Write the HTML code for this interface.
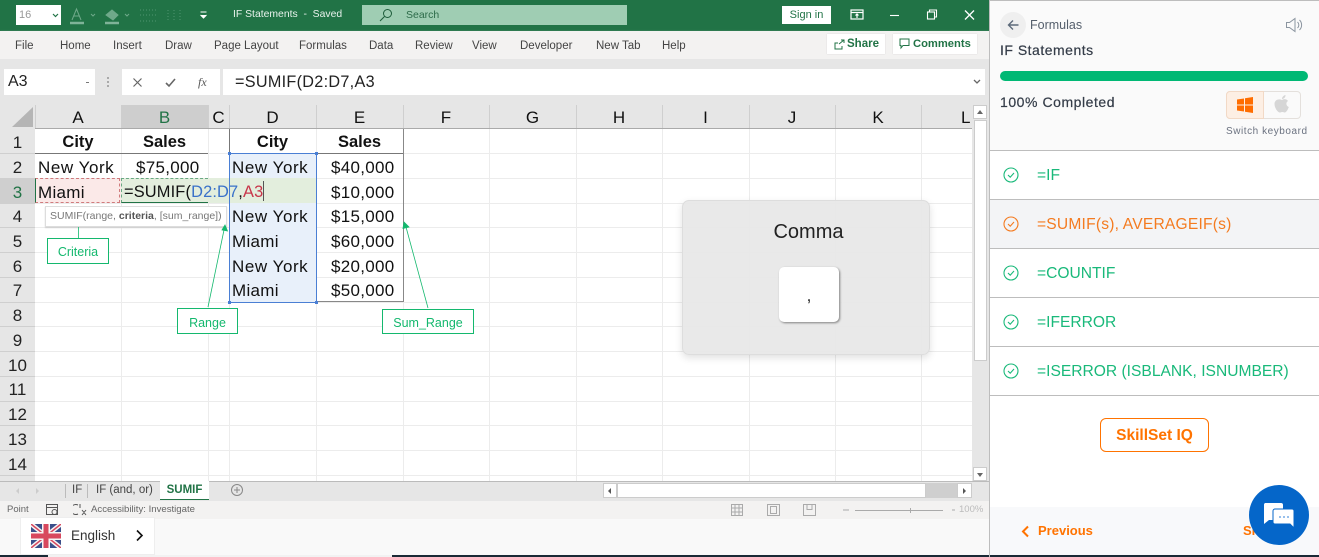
<!DOCTYPE html>
<html><head><meta charset="utf-8"><style>
html,body{margin:0;padding:0}
body{width:1319px;height:557px;overflow:hidden;position:relative;background:#fff;font-family:"Liberation Sans",sans-serif}
.a{position:absolute;white-space:nowrap}
.r{font-size:11.5px;color:#444;top:39px;line-height:14px}
.h{font-size:17px;color:#111;top:108px;line-height:20px;text-align:center}
.n{font-size:17px;color:#222;left:0;width:35px;text-align:center;line-height:25px;margin-top:1px}
.c{font-size:17px;color:#111;line-height:25px;margin-top:1px;letter-spacing:.3px}
.ny{font-size:17px;letter-spacing:.55px}
.b{font-weight:bold;font-size:16.5px;letter-spacing:0}
.lb{position:absolute;border:1px solid #14b86e;color:#14b86e;background:#fff;font-size:12.5px;text-align:center;box-sizing:border-box}
.it{position:absolute;left:990px;width:329px;height:49px;border-bottom:1px solid #bdbdbd;box-sizing:border-box}
.it span{position:absolute;left:47px;top:15px;font-size:15.6px;line-height:20px;white-space:nowrap;color:#19b97a}
.it svg{position:absolute;left:13px;top:16px}
</style></head><body>
<!-- title bar -->
<div class="a" style="left:0;top:0;width:989px;height:31px;background:#217346"></div>
<div class="a" style="left:16px;top:5px;width:45px;height:20px;background:#fff;font-size:11px;color:#999;line-height:20px;text-indent:3px">16</div>
<svg class="a" style="left:52px;top:13px" width="7" height="5"><path d="M1 1l2.500 2.500L6 1" fill="none" stroke="#217346" stroke-width="1.200"/></svg>
<svg class="a" style="left:68px;top:6px" width="130" height="20" fill="none" stroke="#6fa98a" stroke-width="1">
<path d="M4 14L8.500 3L13 14M6 10h5"/><path d="M2 17h14" stroke-width="2.500" stroke="#7fb398"/>
<path d="M23 8l2 2 2-2"/>
<path d="M38 9l6-5 6 5-5 5z" fill="#6fa98a"/><path d="M37 17H51" stroke-width="2.500" stroke="#7fb398"/>
<path d="M57 8l2 2 2-2"/>
<path d="M72 4h16M72 9h16M72 15h16M100 4v11M106 4v11M112 4v11" stroke-dasharray="1 2" stroke="#4f9470"/></svg>
<svg class="a" style="left:199px;top:11px" width="10" height="9" fill="none" stroke="#fff"><path d="M1.500 1h6" /><path d="M1.500 4l3 3 3-3" fill="#fff"/></svg>
<div class="a" style="left:233px;top:8px;font-size:10.400px;color:#e8f2ec;line-height:14px">IF Statements&nbsp; -&nbsp; Saved</div>
<div class="a" style="left:362px;top:5px;width:265px;height:20px;background:#9fcdb3"></div>
<svg class="a" style="left:379px;top:8px" width="14" height="14" fill="none" stroke="#1d5c3a"><circle cx="8.500" cy="5.500" r="4"/><path d="M5.500 8.500L1 13"/></svg>
<div class="a" style="left:406px;top:8px;font-size:10.500px;color:#2c6b49;line-height:14px">Search</div>
<div class="a" style="left:782px;top:6px;width:49px;height:18px;background:#fff;color:#217346;font-size:11px;text-align:center;line-height:19px">Sign in</div>
<svg class="a" style="left:850px;top:9px" width="14" height="12" fill="none" stroke="#fff" stroke-width="1.200"><rect x="1" y="1" width="12" height="9"/><path d="M1 3.500h12"/><path d="M7 9V5M5.500 6.500L7 5l1.500 1.500"/></svg>
<svg class="a" style="left:888px;top:9px" width="100" height="12" fill="none" stroke="#fff" stroke-width="1.100"><path d="M2 6.500h9"/><rect x="39.500" y="3" width="7" height="7"/><path d="M41.500 3V1h7v7h-2"/><path d="M77 1.500l9 9M86 1.500l-9 9" stroke-width="1.300"/></svg>
<!-- ribbon -->
<div class="a" style="left:0;top:31px;width:989px;height:28px;background:#f3f2f1;box-shadow:0 1px 2px #ccc"></div>
<div class="a r" style="left:15px">File</div><div class="a r" style="left:60px">Home</div><div class="a r" style="left:113px">Insert</div><div class="a r" style="left:165px">Draw</div><div class="a r" style="left:214px">Page Layout</div><div class="a r" style="left:299px">Formulas</div><div class="a r" style="left:369px">Data</div><div class="a r" style="left:415px">Review</div><div class="a r" style="left:472px">View</div><div class="a r" style="left:520px">Developer</div><div class="a r" style="left:596px">New Tab</div><div class="a r" style="left:662px">Help</div>
<div class="a" style="left:827px;top:34px;width:58px;height:20px;background:#fff;box-shadow:0 0 1px #ccc;color:#217346;font-size:11.500px;font-weight:bold;line-height:21px;text-indent:20px">Share</div>
<svg class="a" style="left:834px;top:39px" width="12" height="12" fill="none" stroke="#217346"><path d="M7 1h3l0 3M10 1L5 5M8 7v3H1V4h3"/></svg>
<div class="a" style="left:893px;top:34px;width:84px;height:20px;background:#fff;box-shadow:0 0 1px #ccc;color:#217346;font-size:11.200px;font-weight:bold;line-height:21px;text-indent:20px">Comments</div>
<svg class="a" style="left:899px;top:38px" width="12" height="12" fill="none" stroke="#217346"><path d="M1 1h9v6.500H4L2 10V7.500H1z"/></svg>
<!-- formula bar -->
<div class="a" style="left:0;top:59px;width:989px;height:70px;background:#e6e6e6"></div>
<div class="a" style="left:4px;top:69px;width:91px;height:26px;background:#fff;font-size:16px;line-height:26px;text-indent:4px;color:#222">A3</div>
<div class="a" style="left:86px;top:82px;width:3px;height:1px;background:#777"></div>
<div class="a" style="left:107px;top:77px;width:2px;height:10px;border-left:2px dotted #aaa"></div>
<div class="a" style="left:122px;top:69px;width:98px;height:26px;background:#fff"></div>
<svg class="a" style="left:132px;top:76px" width="80" height="14" fill="none" stroke="#666" stroke-width="1.200"><path d="M1.500 2.500l8 8M9.500 2.500l-8 8"/><path d="M34 7l3 3 6-7" stroke-width="1.600"/></svg>
<div class="a" style="left:198px;top:74px;font:italic 12px 'Liberation Serif',serif;color:#555;line-height:16px">fx</div>
<div class="a" style="left:223px;top:69px;width:762px;height:26px;background:#fff;font-size:16.200px;letter-spacing:.3px;line-height:26px;text-indent:12px;color:#222">=SUMIF(D2:D7,A3</div>
<svg class="a" style="left:973px;top:79px" width="8" height="6" fill="none" stroke="#666" stroke-width="1.300"><path d="M1 1l3 3 3-3"/></svg>
<!-- grid -->
<div class="a" style="left:0;top:105px;width:972px;height:24px;background:#e6e6e6"></div>
<div class="a" style="left:0;top:129px;width:35px;height:352px;background:#e6e6e6"></div>
<div class="a" style="left:35px;top:129px;width:937px;height:352px;background:#fff"></div>
<svg class="a" style="left:0;top:105px" width="973" height="376">
<path d="M12 22L33 2V22Z" fill="#b5b5b5"/>
<g stroke="#ececec" fill="none">
<path d="M121.500 24V376M208.500 24V376M229.500 24V376M316.500 24V376M403.500 24V376M489.500 24V376M576.500 24V376M662.500 24V376M749.500 24V376M835.500 24V376M921.500 24V376"/>
<path d="M35 48.500H972M35 73.500H972M35 98.500H972M35 122.500H972M35 147.500H972M35 172.500H972M35 197.500H972M35 221.500H972M35 246.500H972M35 271.500H972M35 296.500H972M35 320.500H972M35 345.500H972M35 370.500H972"/>
</g>
<g stroke="#cfcfcf"><path d="M35.500 0V24M208.500 0V24M229.500 0V24M316.500 0V24M403.500 0V24M489.500 0V24M576.500 0V24M662.500 0V24M749.500 0V24M835.500 0V24M921.500 0V24"/>
<path d="M0 48.500H35M0 73.500H35M0 98.500H35M0 122.500H35M0 147.500H35M0 172.500H35M0 197.500H35M0 221.500H35M0 246.500H35M0 271.500H35M0 296.500H35M0 320.500H35M0 345.500H35M0 370.500H35"/></g>
</svg>
<div class="a" style="left:121px;top:105px;width:87px;height:23px;background:#cecece;border-bottom:1px solid #217346"></div>
<div class="a" style="left:0;top:178px;width:35px;height:25px;background:#cfcfcf"></div>
<div class="a" style="left:35px;top:128px;width:937px;height:1px;background:#aaa"></div>
<div class="a h" style="left:35px;width:86px">A</div><div class="a h" style="left:121px;width:87px;color:#217346">B</div><div class="a h" style="left:208px;width:21px">C</div><div class="a h" style="left:229px;width:87px">D</div><div class="a h" style="left:316px;width:87px">E</div><div class="a h" style="left:403px;width:86px">F</div><div class="a h" style="left:489px;width:87px">G</div><div class="a h" style="left:576px;width:86px">H</div><div class="a h" style="left:662px;width:87px">I</div><div class="a h" style="left:749px;width:86px">J</div><div class="a h" style="left:835px;width:86px">K</div><div class="a h" style="left:961px">L</div>
<div class="a n" style="top:129px">1</div><div class="a n" style="top:154px">2</div><div class="a n" style="top:179px;color:#217346">3</div><div class="a n" style="top:203px">4</div><div class="a n" style="top:228px">5</div><div class="a n" style="top:253px">6</div><div class="a n" style="top:277px">7</div><div class="a n" style="top:302px">8</div><div class="a n" style="top:327px">9</div><div class="a n" style="top:352px">10</div><div class="a n" style="top:376px">11</div><div class="a n" style="top:401px">12</div><div class="a n" style="top:426px">13</div><div class="a n" style="top:451px">14</div>
<!-- fills -->
<div class="a" style="left:230px;top:154px;width:86px;height:148px;background:#e8f0fa"></div>
<div class="a" style="left:35px;top:179px;width:86px;height:24px;background:#fbe9e8"></div>
<div class="a" style="left:121px;top:178px;width:196px;height:25px;background:#e3eedd"></div>
<!-- table borders -->
<div class="a" style="left:35px;top:129px;width:173px;height:24px;border-bottom:1px solid #777"></div>
<div class="a" style="left:229px;top:129px;width:174px;height:24px;border-bottom:1px solid #777"></div>
<div class="a" style="left:229px;top:129px;width:1px;height:25px;background:#777"></div>
<div class="a" style="left:403px;top:129px;width:1px;height:173px;background:#888"></div>
<div class="a" style="left:316px;top:301px;width:88px;height:1px;background:#888"></div>
<div class="a" style="left:229px;top:153px;width:86px;height:148px;border:1px solid #4a7fd4"></div>
<div class="a" style="left:228px;top:152px;width:3px;height:3px;background:#4a7fd4"></div><div class="a" style="left:315px;top:152px;width:3px;height:3px;background:#4a7fd4"></div><div class="a" style="left:228px;top:301px;width:3px;height:3px;background:#4a7fd4"></div><div class="a" style="left:315px;top:301px;width:3px;height:3px;background:#4a7fd4"></div>
<div class="a" style="left:35px;top:178px;width:85px;height:25px;box-sizing:border-box;border:1px dashed #d07a7c;border-left:1px solid #217346"></div>
<div class="a" style="left:121px;top:178px;width:87px;height:25px;box-sizing:border-box;border:1px dashed #6aa883;border-right:0;border-bottom:1px solid #217346"></div>
<!-- cells -->
<div class="a c b" style="left:35px;width:86px;top:129px;text-align:center">City</div><div class="a c b" style="left:121px;width:87px;top:129px;text-align:center">Sales</div>
<div class="a c b" style="left:229px;width:87px;top:129px;text-align:center">City</div><div class="a c b" style="left:316px;width:87px;top:129px;text-align:center">Sales</div>
<div class="a c ny" style="left:38px;top:154px">New York</div><div class="a c" style="left:136px;top:154px">$75,000</div>
<div class="a c" style="left:38px;top:179px">Miami</div>
<div class="a c" style="left:124px;top:179px;font-size:16.400px;letter-spacing:.15px">=SUMIF(<span style="color:#3a72c9">D2:D7</span>,<span style="color:#c8364a">A3</span></div>
<div class="a" style="left:263px;top:181px;width:1px;height:20px;background:#555"></div>
<div class="a c ny" style="left:232px;top:154px">New York</div><div class="a c ny" style="left:232px;top:203px">New York</div><div class="a c" style="left:232px;top:228px">Miami</div><div class="a c ny" style="left:232px;top:253px">New York</div><div class="a c" style="left:232px;top:277px">Miami</div>
<div class="a c" style="left:331px;top:154px">$40,000</div><div class="a c" style="left:331px;top:179px">$10,000</div><div class="a c" style="left:331px;top:203px">$15,000</div><div class="a c" style="left:331px;top:228px">$60,000</div><div class="a c" style="left:331px;top:253px">$20,000</div><div class="a c" style="left:331px;top:277px">$50,000</div>
<!-- tooltip -->
<div class="a" style="left:45px;top:206px;width:180px;height:19px;background:#fff;border:1px solid #ddd;box-shadow:0 1px 1px #ccc;font-size:10.500px;color:#777;line-height:18px;text-indent:4px;box-sizing:content-box">SUMIF(range, <b style="color:#555">criteria</b>, [sum_range])</div>
<!-- callouts -->
<svg class="a" style="left:0;top:200px" width="480" height="130" fill="none" stroke="#14b86e" stroke-width=".8">
<path d="M78.500 27V38"/><path d="M208 107L224 30M428 108L406 27"/>
<path d="M225 25l2.500 6-5.500-1z M404 22l5 5-6 1.500z" fill="#14b86e"/></svg>
<div class="lb" style="left:47px;top:238px;width:62px;height:26px;line-height:27px">Criteria</div>
<div class="lb" style="left:177px;top:308px;width:61px;height:26px;line-height:28px">Range</div>
<div class="lb" style="left:382px;top:309px;width:92px;height:25px;line-height:27px">Sum_Range</div>
<!-- comma card -->
<div class="a" style="left:682px;top:200px;width:248px;height:155px;box-sizing:border-box;background:rgba(232,232,232,.94);border:1.500px solid #ddd;border-radius:7px;box-shadow:0 3px 8px rgba(0,0,0,.12)"></div>
<div class="a" style="left:682px;top:220px;width:253px;text-align:center;font-size:20px;color:#222;line-height:23px;margin-top:.5px">Comma</div>
<div class="a" style="left:779px;top:267px;width:60px;height:55px;background:#fff;border-radius:5px;box-shadow:1px 1px 2px rgba(0,0,0,.45);text-align:center;font-size:17px;line-height:58px;color:#222">,</div>
<!-- scrollbars -->
<div class="a" style="left:972px;top:105px;width:17px;height:376px;background:#e6e6e6"></div>
<div class="a" style="left:973px;top:105px;width:14px;height:14px;background:#fff;border:1px solid #ccc;box-sizing:border-box"></div>
<div class="a" style="left:974px;top:120px;width:13px;height:241px;background:#fff;border:1px solid #ccc;box-sizing:border-box"></div>
<div class="a" style="left:977px;top:110px;border:3px solid transparent;border-top:0;border-bottom:4px solid #666"></div>
<div class="a" style="left:973px;top:467px;width:14px;height:14px;background:#fff;border:1px solid #ccc;box-sizing:border-box"></div>
<div class="a" style="left:977px;top:473px;border:3px solid transparent;border-bottom:0;border-top:4px solid #666"></div>
<!-- tabs -->
<div class="a" style="left:0;top:481px;width:989px;height:20px;background:#e6e6e6;border-top:1px solid #bbb;box-sizing:border-box"></div>
<div class="a" style="left:16px;top:488px;border:3px solid transparent;border-left:0;border-right:3px solid #ccc"></div>
<div class="a" style="left:36px;top:488px;border:3px solid transparent;border-right:0;border-left:3px solid #ccc"></div>
<div class="a" style="left:65px;top:484px;width:1px;height:14px;background:#bbb"></div>
<div class="a" style="left:87px;top:484px;width:1px;height:14px;background:#bbb"></div>
<div class="a" style="left:72px;top:483px;font-size:11.500px;color:#444;line-height:14px">IF</div>
<div class="a" style="left:96px;top:483px;font-size:11.500px;color:#444;line-height:14px">IF (and, or)</div>
<div class="a" style="left:160px;top:481px;width:49px;height:18px;background:#fff;border-bottom:1px solid #217346;color:#217346;font-size:11.500px;font-weight:bold;text-align:center;line-height:18px">SUMIF</div>
<svg class="a" style="left:230px;top:483px" width="14" height="14" fill="none" stroke="#888"><circle cx="7" cy="7" r="5.500"/><path d="M7 4v6M4 7h6"/></svg>
<div class="a" style="left:603px;top:483px;width:354px;height:15px;background:#cfcfcf"></div>
<div class="a" style="left:603px;top:483px;width:14px;height:15px;background:#fff;border:1px solid #ccc;box-sizing:border-box"></div>
<div class="a" style="left:617px;top:483px;width:309px;height:15px;background:#fff;border:1px solid #ccc;box-sizing:border-box"></div>
<div class="a" style="left:957px;top:483px;width:15px;height:15px;background:#fff;border:1px solid #ccc;box-sizing:border-box"></div>
<div class="a" style="left:608px;top:488px;border:3px solid transparent;border-left:0;border-right:3px solid #555"></div>
<div class="a" style="left:963px;top:488px;border:3px solid transparent;border-right:0;border-left:3px solid #555"></div>
<!-- status -->
<div class="a" style="left:0;top:501px;width:989px;height:18px;background:#f3f2f1"></div>
<div class="a" style="left:7px;top:503px;font-size:9.500px;color:#666;line-height:14px">Point</div>
<svg class="a" style="left:45px;top:503px" width="15" height="14" fill="none" stroke="#555"><rect x="1.500" y="1.500" width="11" height="10"/><path d="M1.500 4.500h11"/><circle cx="9.500" cy="9" r="2.500" fill="#f3f2f1"/></svg>
<svg class="a" style="left:73px;top:503px" width="15" height="14" fill="none" stroke="#555"><path d="M5 2a5 5 0 1 0 0 9M7 1v4M9 7l4 5M13 7l-4 5"/></svg>
<div class="a" style="left:91px;top:503px;font-size:9.600px;color:#666;line-height:14px">Accessibility: Investigate</div>
<svg class="a" style="left:730px;top:503px" width="225" height="14" fill="none" stroke="#aaa"><path d="M1.500 1.500h11v11h-11zM1.500 5h11M1.500 9h11M5 1.500v11M9 1.500v11"/><rect x="37.500" y="1.500" width="12" height="11"/><rect x="40.500" y="3.500" width="6" height="7"/><path d="M73.500 1.500h12v11h-12zM77 1.500v5h5v-5"/><path d="M113 7h6M125 7.500h88M180.500 5v5M222 7h6"/></svg>
<div class="a" style="left:959px;top:503px;font-size:9.500px;color:#bbb;line-height:14px">100%</div>
<!-- bottom -->
<div class="a" style="left:0;top:519px;width:989px;height:36px;background:#f9f9f9"></div>
<div class="a" style="left:0;top:555px;width:989px;height:2px;background:#1a2a36"></div>
<div class="a" style="left:48px;top:555px;width:344px;height:2px;background:#f2f2f2"></div>
<div class="a" style="left:20px;top:517px;width:135px;height:38px;background:#fff;border:1px solid #eee;box-sizing:border-box"></div>
<svg class="a" style="left:31px;top:524px" width="30" height="24" viewBox="0 0 30 24"><rect width="30" height="24" fill="#3b4f8a"/><path d="M0 0L30 24M30 0L0 24" stroke="#f5f5f5" stroke-width="4.500"/><path d="M0 0L30 24M30 0L0 24" stroke="#d8485e" stroke-width="1.500"/><path d="M15 0V24M0 12H30" stroke="#f5f5f5" stroke-width="8"/><path d="M15 0V24M0 12H30" stroke="#d8485e" stroke-width="5"/></svg>
<div class="a" style="left:71px;top:527px;font-size:13.500px;color:#333;line-height:17px">English</div>
<svg class="a" style="left:135px;top:529px" width="9" height="13" fill="none" stroke="#111" stroke-width="1.600"><path d="M2 1.500L7 6.500L2 11.500"/></svg>
<!-- right panel -->
<div class="a" style="left:989px;top:0;width:330px;height:151px;background:#fafafa;border-left:1px solid #bdbdbd;border-top:1px solid #bdbdbd;border-bottom:1px solid #bdbdbd;box-sizing:border-box"></div>
<div class="a" style="left:989px;top:151px;width:1px;height:406px;background:#bdbdbd"></div>
<div class="a" style="left:1000px;top:12px;width:26px;height:26px;border-radius:50%;background:#efefef"></div>
<svg class="a" style="left:1007px;top:19px" width="13" height="12" fill="none" stroke="#5d6a7a" stroke-width="1.400"><path d="M11.500 6H1.500M6 1.500L1.500 6L6 10.500"/></svg>
<div class="a" style="left:1030px;top:17px;font-size:12.500px;color:#555f6c;line-height:16px">Formulas</div>
<svg class="a" style="left:1285px;top:17px" width="18" height="16" fill="none" stroke="#8b95a0"><path d="M1.500 5.500h3L10 1.500v13L4.500 10.500h-3z"/><path d="M12.500 5a4 4 0 0 1 0 6M14.500 3a7 7 0 0 1 0 10"/></svg>
<div class="a" style="left:1000px;top:42px;font-size:14px;color:#343c48;line-height:17px;letter-spacing:.5px;-webkit-text-stroke:.2px #343c48">IF Statements</div>
<div class="a" style="left:1000px;top:71px;width:308px;height:10px;border-radius:5px;background:#00b874"></div>
<div class="a" style="left:1000px;top:94px;font-size:14px;color:#343c48;line-height:17px;letter-spacing:.55px;-webkit-text-stroke:.2px #343c48">100% Completed</div>
<div class="a" style="left:1226px;top:91px;width:75px;height:28px;box-sizing:border-box;border:1px solid #e4e0dc;border-radius:4px;background:#fafafa"></div>
<div class="a" style="left:1226px;top:91px;width:38px;height:28px;box-sizing:border-box;border:1px solid #f2d9c6;border-radius:4px 0 0 4px;background:#fdefe4"></div>
<svg class="a" style="left:1236px;top:96px" width="18" height="18" fill="#ff6d00"><path d="M1 3.500L8 2.500V8.500H1zM9 2.300L17 1V8.500H9zM1 9.500H8V15.500L1 14.500zM9 9.500H17V17L9 15.700z"/></svg>
<svg class="a" style="left:1273px;top:95px" width="18" height="20" fill="#d6d6d6"><path d="M9 5c2-1.500 5-1 6 1-2.500 1.500-2 5 .8 6-1 3-3 6-4.500 5.500-1.500-.7-2.500-.7-4 0C5 18 1.500 13 1.500 9 1.500 5 5.500 3.500 9 5zM9 4c0-2 1.500-3.500 3.500-4 .2 2-1.500 4-3.500 4z"/></svg>
<div class="a" style="left:1226px;top:125px;font-size:10px;color:#6b7280;line-height:13px;letter-spacing:.55px">Switch keyboard</div>
<div class="it" style="top:151px"><svg width="16" height="16" fill="none" stroke="#19b97a" stroke-width="1.100"><circle cx="8" cy="8" r="7"/><path d="M5 8l2.200 2.200L11 6"/></svg><span>=IF</span></div>
<div class="it" style="top:200px;background:#f3f4f6"><svg width="16" height="16" fill="none" stroke="#f47b20" stroke-width="1.100"><circle cx="8" cy="8" r="7"/><path d="M5 8l2.200 2.200L11 6"/></svg><span style="color:#f47b20;letter-spacing:.2px">=SUMIF(s), AVERAGEIF(s)</span></div>
<div class="it" style="top:249px"><svg width="16" height="16" fill="none" stroke="#19b97a" stroke-width="1.100"><circle cx="8" cy="8" r="7"/><path d="M5 8l2.200 2.200L11 6"/></svg><span>=COUNTIF</span></div>
<div class="it" style="top:298px"><svg width="16" height="16" fill="none" stroke="#19b97a" stroke-width="1.100"><circle cx="8" cy="8" r="7"/><path d="M5 8l2.200 2.200L11 6"/></svg><span>=IFERROR</span></div>
<div class="it" style="top:347px"><svg width="16" height="16" fill="none" stroke="#19b97a" stroke-width="1.100"><circle cx="8" cy="8" r="7"/><path d="M5 8l2.200 2.200L11 6"/></svg><span>=ISERROR (ISBLANK, ISNUMBER)</span></div>
<div class="a" style="left:1100px;top:418px;width:109px;height:34px;box-sizing:border-box;border:1px solid #ff7300;border-radius:6px;color:#ff7300;font-size:15.500px;font-weight:bold;text-align:center;line-height:33px">SkillSet IQ</div>
<div class="a" style="left:990px;top:507px;width:329px;height:48px;background:#f8f9fb"></div>
<div class="a" style="left:990px;top:555px;width:329px;height:2px;background:#1a2a36"></div>
<svg class="a" style="left:1021px;top:525px" width="9" height="13" fill="none" stroke="#ff7300" stroke-width="2"><path d="M7 1.500L2 6.500L7 11.500"/></svg>
<div class="a" style="left:1038px;top:523px;font-size:13px;font-weight:bold;color:#ff7300;line-height:16px">Previous</div>
<div class="a" style="left:1243px;top:523px;font-size:13px;font-weight:bold;color:#ff7300;line-height:16px">Skip</div>
<div class="a" style="left:1249px;top:485px;width:60px;height:60px;border-radius:50%;background:#0566c9"></div>
<svg class="a" style="left:1262px;top:502px" width="34" height="30"><path d="M3 1h16a2 2 0 0 1 2 2v13a2 2 0 0 1-2 2H7l-5 4V3a2 2 0 0 1 1-2z" fill="#fff"/><path d="M13 7h17a2 2 0 0 1 2 2v17l-4-4H13a2 2 0 0 1-2-2V9a2 2 0 0 1 2-2z" fill="#fff" stroke="#0566c9"/><path d="M17 15h2M21 15h2M25 15h2" stroke="#5a9be0" stroke-width="1.200"/></svg>
</body></html>
